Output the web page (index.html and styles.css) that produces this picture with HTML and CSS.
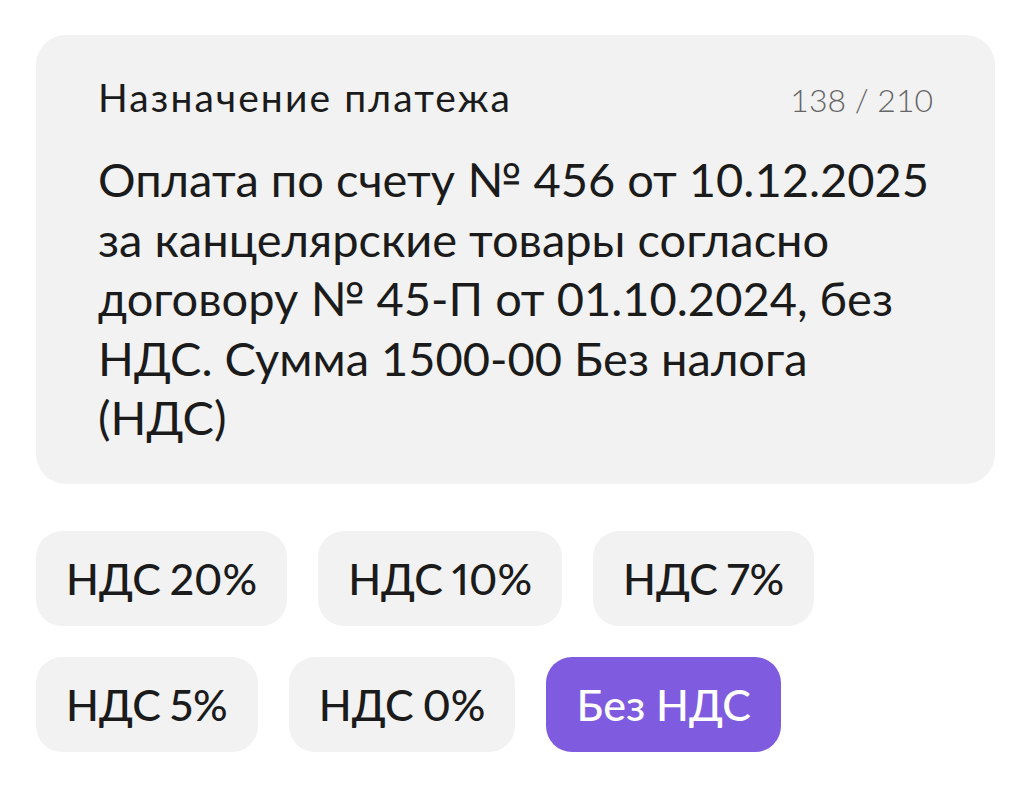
FILE: index.html
```html
<!DOCTYPE html>
<html lang="ru">
<head>
<meta charset="utf-8">
<link rel="stylesheet" href="styles.css">
</head>
<body>
<div class="page">
  <div class="card">
    <div class="card-head">
      <span class="card-title">Назначение платежа</span>
      <span class="counter">138 / 210</span>
    </div>
    <div class="card-text">Оплата по счету № 456 от 10.12.2025<br>за канцелярские товары согласно<br>договору № 45-П от 01.10.2024, без<br>НДС. Сумма 1500-00 Без налога<br>(НДС)</div>
  </div>
  <div class="chips">
    <div class="chip-row">
      <span class="chip">НДС 20%</span>
      <span class="chip">НДС 10%</span>
      <span class="chip">НДС 7%</span>
    </div>
    <div class="chip-row">
      <span class="chip">НДС 5%</span>
      <span class="chip">НДС 0%</span>
      <span class="chip chip-active">Без НДС</span>
    </div>
  </div>
</div>
</body>
</html>
```

FILE: styles.css
```css
html, body {
  margin: 0;
  padding: 0;
  background: #ffffff;
}
body {
  font-family: "Lato", "Noto Sans", sans-serif;
  color: #1b1b1b;
}
.page {
  padding: 35px 38px 0 36px;
}
.card {
  background: #f2f2f2;
  border-radius: 30px;
  padding: 39px 62px 36px 62px;
  width: 835px;
}
.card-head {
  display: flex;
  justify-content: space-between;
  align-items: baseline;
}
.card-title {
  font-size: 39px;
  font-weight: 400;
  letter-spacing: 2.1px;
  line-height: 46px;
}
.counter {
  font-size: 32px;
  font-weight: 300;
  color: #666666;
  line-height: 46px;
}
.card-text {
  margin-top: 27px;
  font-size: 47px;
  font-weight: 400;
  line-height: 59.5px;
  white-space: nowrap;
}
.chips {
  margin-top: 47px;
  display: flex;
  flex-direction: column;
  gap: 31px;
}
.chip-row {
  display: flex;
  gap: 31px;
}
.chip {
  display: inline-block;
  background: #f2f2f2;
  border-radius: 26px;
  height: 95px;
  line-height: 95px;
  padding: 0 30px;
  font-size: 43px;
  font-weight: 500;
  word-spacing: -2px;
  font-feature-settings: "pnum" 1;
  font-variant-numeric: proportional-nums;
  color: #1b1b1b;
}
.chip-narrow {
  padding: 0 28px;
}
.chip-active {
  background: #7f5be0;
  color: #ffffff;
  word-spacing: 0;
}
```
